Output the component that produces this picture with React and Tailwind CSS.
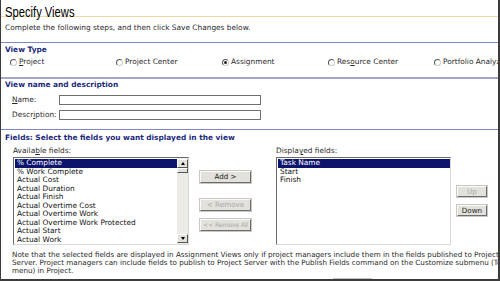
import React from 'react';

const VIEW_TYPES = [
  { label: 'Project', key: 'P', rest: 'roject' },
  { label: 'Project Center' },
  { label: 'Assignment', checked: true },
  { label: 'Resource Center', pre: 'Res', key: 'o', rest: 'urce Center' },
  { label: 'Portfolio Analyzer' },
];

const AVAILABLE = [
  '% Complete',
  '% Work Complete',
  'Actual Cost',
  'Actual Duration',
  'Actual Finish',
  'Actual Overtime Cost',
  'Actual Overtime Work',
  'Actual Overtime Work Protected',
  'Actual Start',
  'Actual Work',
];

const DISPLAYED = ['Task Name', 'Start', 'Finish'];

function Radio({ checked }) {
  return (
    <span className="relative inline-flex w-[7px] h-[7px] shrink-0 rounded-full border border-t-[#555] border-l-[#555] border-b-[#ccc] border-r-[#ccc] bg-white items-center justify-center">
      {checked && <span className="w-[3px] h-[3px] rounded-full bg-[#222]" />}
    </span>
  );
}

function Button({ children, disabled, small, className = '' }) {
  return (
    <div
      className={`flex items-center justify-center whitespace-nowrap overflow-hidden bg-[#e3e1dc] border border-t-[#fafafa] border-l-[#fafafa] border-b-[#6d6d6d] border-r-[#6d6d6d] outline outline-1 outline-[#c9c7c2] leading-none ${
        small ? 'text-[6.2px] tracking-[-0.03em]' : 'text-[7.2px]'
      } ${disabled ? 'text-[#a9a9a9]' : 'text-[#222]'} ${className}`}
    >
      {children}
    </div>
  );
}

function ListBox({ items, scroll }) {
  return (
    <div className="flex h-[88px] bg-white border border-t-[#6a6a6a] border-l-[#6a6a6a] border-b-[#d8d8d8] border-r-[#d8d8d8]">
      <div className="flex-1 pt-[1px] pl-[1px] overflow-hidden">
        {items.map((it, i) => (
          <div
            key={it}
            className={`h-[8.5px] pl-[2px] text-[7.4px] leading-[8.5px] whitespace-nowrap ${
              i === 0 ? 'bg-[#0c146c] text-white' : 'text-[#111]'
            }`}
          >
            {it}
          </div>
        ))}
      </div>
      {scroll && (
        <div className="w-[11px] flex flex-col bg-[#ecebe6] pt-[1px] pb-[1px]">
          <div className="h-[9px] flex items-center justify-center bg-[#e3e1dc] border border-t-[#fff] border-l-[#fff] border-b-[#555] border-r-[#555]">
            <span className="w-0 h-0 border-l-[2.5px] border-r-[2.5px] border-b-[3px] border-l-transparent border-r-transparent border-b-black" />
          </div>
          <div className="h-[5px] bg-[#e3e1dc] border border-t-[#fff] border-l-[#fff] border-b-[#555] border-r-[#555]" />
          <div className="flex-1" />
          <div className="h-[9px] flex items-center justify-center bg-[#e3e1dc] border border-t-[#fff] border-l-[#fff] border-b-[#555] border-r-[#555]">
            <span className="w-0 h-0 border-l-[2.5px] border-r-[2.5px] border-t-[3px] border-l-transparent border-r-transparent border-t-black" />
          </div>
        </div>
      )}
    </div>
  );
}

export default function App() {
  return (
    <div className="w-[500px] h-[281px] overflow-hidden bg-white border-l border-r-2 border-b-2 border-[#3c3c3c] font-['DejaVu_Sans',sans-serif] text-[#2a2a2a]">
      {/* ── TITLE ── */}
      <div className="h-[17px] border-b border-[#f1d6a6] pl-[4px]">
        <span className="inline-block origin-left scale-x-80 font-['Liberation_Sans',sans-serif] text-[14px] leading-[16px] font-medium text-black">
          Specify Views
        </span>
      </div>

      <p className="h-[25px] pl-[4px] pt-[6px] text-[7.4px] leading-[10px] whitespace-nowrap">
        Complete the following steps, and then click Save Changes below.
      </p>

      {/* ── VIEW TYPE ── */}
      <div className="h-[35px] border-t border-[#7d87c4]">
        <h2 className="pl-[4px] pt-[2px] text-[7.4px] leading-[10px] font-bold text-[#1b2a7e]">View Type</h2>
        <div className="grid grid-cols-[106px_106px_106px_106px_106px] pl-[9px] pt-[2px]">
          {VIEW_TYPES.map((t) => (
            <label key={t.label} className="flex items-center gap-[2px] h-[10px] text-[7.4px] whitespace-nowrap">
              <Radio checked={t.checked} />
              <span>
                {t.key ? (
                  <>
                    {t.pre}
                    <u>{t.key}</u>
                    {t.rest}
                  </>
                ) : (
                  t.label
                )}
              </span>
            </label>
          ))}
        </div>
      </div>

      {/* ── NAME / DESCRIPTION ── */}
      <div className="h-[52px] border-t-2 border-[#a2a8c6]">
        <h2 className="pl-[4px] pt-[1px] text-[7.4px] leading-[10px] font-bold text-[#1b2a7e]">View name and description</h2>
        <div className="flex flex-col gap-[5px] pl-[11px] pt-[5px]">
          <div className="flex items-center h-[10px]">
            <span className="w-[47px] text-[7.4px]">
              <u>N</u>ame:
            </span>
            <div className="w-[202px] h-[10px] border border-[#6f6f6f] bg-white" />
          </div>
          <div className="flex items-center h-[10px]">
            <span className="w-[47px] text-[7.4px]">
              Descr<u>i</u>ption:
            </span>
            <div className="w-[202px] h-[10px] border border-[#6f6f6f] bg-white" />
          </div>
        </div>
      </div>

      {/* ── FIELDS ── */}
      <div className="border-t border-[#7d87c4]">
        <h2 className="pl-[4px] pt-[3px] text-[7.4px] leading-[10px] font-bold text-[#1b2a7e] whitespace-nowrap">
          Fields: Select the fields you want displayed in the view
        </h2>
        <div className="flex pl-[12px] pt-[3px]">
          <div className="w-[176px]">
            <p className="h-[11px] text-[7.4px] leading-[10px]">
              Availa<u>b</u>le fields:
            </p>
            <ListBox items={AVAILABLE} scroll />
          </div>
          <div className="w-[51px] ml-[11px] pt-[25px] flex flex-col">
            <Button className="h-[12px]">Add &gt;</Button>
            <Button disabled className="h-[12px] mt-[16px]">&lt; Remove</Button>
            <Button disabled small className="h-[12px] mt-[8px]">&lt;&lt; Remove All</Button>
          </div>
          <div className="w-[175px] ml-[25px]">
            <p className="h-[11px] text-[7.4px] leading-[10px]">
              Displa<u>y</u>ed fields:
            </p>
            <ListBox items={DISPLAYED} />
          </div>
          <div className="w-[30px] ml-[6px] pt-[40px] flex flex-col">
            <Button disabled className="h-[11px]">Up</Button>
            <Button className="h-[11px] mt-[8px]">Down</Button>
          </div>
        </div>

        <div className="pl-[11px] pt-[6px] text-[7.2px] leading-[8px] whitespace-nowrap">
          <p>Note that the selected fields are displayed in Assignment Views only if project managers include them in the fields published to Project</p>
          <p>Server. Project managers can include fields to publish to Project Server with the Publish Fields command on the Customize submenu (Tools</p>
          <p>menu) in Project.</p>
        </div>
        <div className="ml-[332px] mt-[3px] w-[39px] h-[3px] border-t border-x border-[#c4c4c4]" />
      </div>
    </div>
  );
}
